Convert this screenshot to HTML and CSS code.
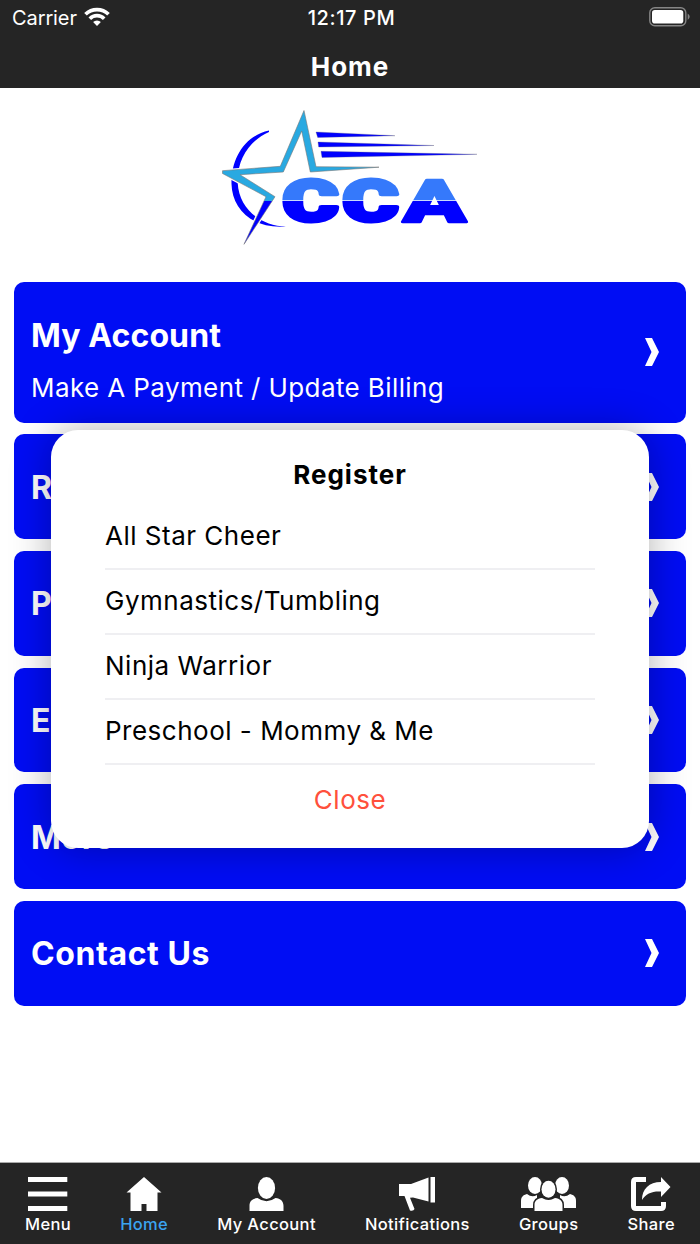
FILE: index.html
```html
<!DOCTYPE html>
<html lang="en">

<head>
	<meta charset="UTF-8">
	<meta name="viewport" content="width=device-width, initial-scale=1.0">
	<title>Home</title>
	<link rel="stylesheet" href="styles.css">
</head>

<body>
	<header>
		<div class="status">
			<div class="carrier">
				<span>Carrier</span>
				<svg class="wifi" width="26" height="20" viewBox="0 0 26 20">
					<g fill="none" stroke="#fff" stroke-width="3.7">
						<path d="M1.5 7.3a16.3 16.3 0 0 1 23 0"/>
						<path d="M5.8 11.7a10.2 10.2 0 0 1 14.4 0"/>
					</g>
					<path d="M13 19l-3.900-4a5.500 5.500 0 0 1 7.800 0z" fill="#fff"/>
				</svg>
			</div>
			<span class="time">12:17 PM</span>
			<svg class="battery" width="42" height="20" viewBox="0 0 42 20">
				<rect x=".8" y=".8" width="36" height="18" rx="5" fill="none" stroke="#858585" stroke-width="1.4"/>
				<rect x="3" y="3" width="31.3" height="13.5" rx="2.8" fill="#fff"/>
				<path d="M38.7 6.6q4 3.2 0 6.4z" fill="#858585"/>
			</svg>
		</div>
		<h1>Home</h1>
	</header>

	<main>
		<svg class="logo" width="270" height="150" viewBox="215 100 270 150">
			<defs>
				<linearGradient id="letters" gradientUnits="userSpaceOnUse" x1="0" y1="178" x2="0" y2="224">
					<stop offset=".47" stop-color="#3579fb"/>
					<stop offset=".47" stop-color="#c8d8ff"/>
					<stop offset=".5" stop-color="#c8d8ff"/>
					<stop offset=".5" stop-color="#00f"/>
				</linearGradient>
				<linearGradient id="star" gradientUnits="userSpaceOnUse" x1="0" y1="110" x2="0" y2="245">
					<stop offset=".674" stop-color="#29a9e1"/>
					<stop offset=".674" stop-color="#00f"/>
				</linearGradient>
			</defs>
			<path fill="#00f" d="M269 130.500C244 136 231 159 231.500 184C232 208 251 229 286 226.500C261 226 239 209 237.700 183C236.500 160 250 140 269 132z"/>
			<path fill="#00f" stroke="#557" stroke-width=".3" d="M316 132L395 135.700L317.700 137.500zM318 142L434 145.500L318.700 147zM321 151.300L477 154.300L322 157.500z"/>
			<path fill="#fff" stroke="#fff" stroke-width="3" d="M222.500 170.700L280 166.500L304 112L316 167L379 167L310.300 172L301.700 131L283.300 172L240 174.700L275 196.700L244 244L266 196.700L222.500 173.500z"/>
			<path fill="url(#star)" stroke="#777" stroke-width=".6" d="M222.500 170.700L280.300 166.300L304 110.500L316 166.700L379 167.200L310.300 172L301.700 131L283.300 172L240 174.700L275 196.700L244 244.300L266 196.700L222.500 173.500z"/>
			<g class="logo-text">
				<text x="282.500" y="220.500" textLength="56" lengthAdjust="spacingAndGlyphs">C</text>
				<text x="342.500" y="220.500" textLength="56" lengthAdjust="spacingAndGlyphs">C</text>
				<text class="logo-a" x="403" y="222" textLength="63" lengthAdjust="spacingAndGlyphs">A</text>
			</g>
		</svg>

		<div class="cards">
			<a class="card tall">
				<div>
					<h2>My Account</h2>
					<p>Make A Payment / Update Billing</p>
				</div>
				<svg class="arrow" viewBox="0 0 14 28"><path d="M0 0h7l7 14-7 14H0l6.500-14z"/></svg>
			</a>
			<a class="card">
				<h2>R</h2>
				<svg class="arrow" viewBox="0 0 14 28"><path d="M0 0h7l7 14-7 14H0l6.500-14z"/></svg>
			</a>
			<a class="card">
				<h2>P</h2>
				<svg class="arrow" viewBox="0 0 14 28"><path d="M0 0h7l7 14-7 14H0l6.500-14z"/></svg>
			</a>
			<a class="card">
				<h2>E</h2>
				<svg class="arrow" viewBox="0 0 14 28"><path d="M0 0h7l7 14-7 14H0l6.500-14z"/></svg>
			</a>
			<a class="card">
				<h2>More</h2>
				<svg class="arrow" viewBox="0 0 14 28"><path d="M0 0h7l7 14-7 14H0l6.500-14z"/></svg>
			</a>
			<a class="card">
				<h2>Contact Us</h2>
				<svg class="arrow" viewBox="0 0 14 28"><path d="M0 0h7l7 14-7 14H0l6.500-14z"/></svg>
			</a>
		</div>
	</main>

	<nav>
		<a class="tab">
			<svg width="40" height="34" viewBox="0 0 40 34"><path d="M0 0h39.300v5H0zM0 14.500h39.300v5H0zM0 29h39.300v5H0z"/></svg>
			<span>Menu</span>
		</a>
		<a class="tab active">
			<svg width="36" height="34" viewBox="0 0 36 34"><path d="M18 0L35.500 15.500H31.500V34H20.500V27h-5v7H4.500V15.500H.5z"/></svg>
			<span>Home</span>
		</a>
		<a class="tab">
			<svg width="35" height="34" viewBox="0 0 35 34">
				<ellipse cx="17.500" cy="11" rx="8.600" ry="11"/>
				<path d="M.5 34v-5c0-5 3-7.500 8-8q9 6.500 18 0c5 .5 8 3 8 8v5z"/>
			</svg>
			<span>My Account</span>
		</a>
		<a class="tab">
			<svg width="36" height="34" viewBox="0 0 36 34"><path d="M0 7h12L29.500.5v24L14 20.500l-3 .3 4.500 11.200q-1 2.500-4.500 1.500L5.500 19H0zM31.500 0H36v25.500h-4.500z"/></svg>
			<span>Notifications</span>
		</a>
		<a class="tab">
			<svg width="55" height="34" viewBox="0 0 55 34">
				<ellipse cx="14" cy="8.500" rx="7" ry="8.500"/>
				<ellipse cx="41" cy="8.500" rx="7" ry="8.500"/>
				<path d="M0 31v-7c0-4 2-6 6-7q5 4 10 1v13zM55 31v-7c0-4-2-6-6-7q-5 4-10 1v13z"/>
				<g stroke="#252525" stroke-width="3" paint-order="stroke">
					<path d="M13.500 34v-6c0-4 2.500-6.500 7.500-7q6.500 4 13 0c5 .5 7.500 3 7.500 7v6z"/>
					<ellipse cx="27.500" cy="12.300" rx="7" ry="8.500"/>
				</g>
			</svg>
			<span>Groups</span>
		</a>
		<a class="tab">
			<svg width="40" height="34" viewBox="0 0 40 34">
				<path d="M15 2.500H5Q2.500 2.500 2.500 5v24Q2.500 31.500 5 31.500H30Q32.500 31.500 32.500 29V25" fill="none" stroke="#fff" stroke-width="5"/>
				<path d="M30 0l9.500 10L30 20v-5.500c-9-.5-15 2-19 8.500C11 12 18 5 30 5z"/>
			</svg>
			<span>Share</span>
		</a>
	</nav>

	<div class="dialog">
		<h3>Register</h3>
		<ul>
			<li>All Star Cheer</li>
			<li>Gymnastics/Tumbling</li>
			<li>Ninja Warrior</li>
			<li>Preschool - Mommy &amp; Me</li>
		</ul>
		<button type="button">Close</button>
	</div>
</body>
</html>
```

FILE: styles.css
```css
* {
	box-sizing: border-box;
	margin: 0;
	padding: 0;
}

body {
	display: flex;
	flex-direction: column;
	height: 1244px;
	overflow: hidden;
	font-family: Inter, "Liberation Sans", sans-serif;
	background-color: white;
}

header {
	height: 88px;
	background-color: #252525;
	color: white;
}

.status {
	display: grid;
	grid-template-columns: 1fr auto 1fr;
	align-items: center;
	height: 36px;
	padding: 0 9px 0 12px;
	font-size: 20px;
	line-height: 36px;
}

.carrier {
	display: flex;
	align-items: center;
	gap: 7px;
	letter-spacing: -0.1px;
}

.wifi {
	margin-bottom: 3px;
}

.time {
	font-weight: 500;
	letter-spacing: 0.6px;
}

.battery {
	justify-self: end;
	margin-bottom: 2px;
}

h1 {
	font-size: 26px;
	font-weight: 700;
	line-height: 61px;
	letter-spacing: 1px;
	text-align: center;
}

main {
	flex: 1;
	padding: 12px 14px 0;
}

.logo {
	display: block;
	margin-left: 201px;
}

.logo-text {
	font-family: Roboto, sans-serif;
	font-size: 57px;
	font-weight: 900;
	fill: url(#letters);
	stroke: url(#letters);
	stroke-width: 4px;
	stroke-linejoin: round;
}

.logo-a {
	font-size: 59px;
	stroke-width: 2.5px;
}

.cards {
	display: grid;
	gap: 11.8px;
	margin-top: 32.4px;
}

.card {
	display: flex;
	align-items: center;
	justify-content: space-between;
	height: 104.8px;
	padding: 0 27px 0 17px;
	border-radius: 10px;
	background-color: #000df4;
	color: white;
}

.card.tall {
	height: 140.2px;
}

h2 {
	padding-top: 2px;
	font-size: 32px;
	font-weight: 700;
	line-height: 40px;
	letter-spacing: 0.6px;
}

.card p {
	margin-top: 16px;
	font-size: 26px;
	line-height: 32px;
	letter-spacing: 0.4px;
}

.tall h2 {
	margin-top: 13px;
	letter-spacing: 0.1px;
}

.arrow {
	width: 14px;
	height: 28px;
	fill: white;
}

nav {
	display: flex;
	justify-content: space-between;
	height: 82px;
	padding: 14px 25px 0;
	border-top: 1px solid #aaa;
	background-color: #252525;
	color: white;
}

.tab {
	display: flex;
	flex-direction: column;
	align-items: center;
	font-size: 16.5px;
	font-weight: 550;
	line-height: 22px;
	letter-spacing: 0.35px;
}

.tab svg {
	margin-bottom: 2px;
	fill: white;
}

.tab.active {
	color: #3ba4ef;
}

.dialog {
	position: absolute;
	top: 430px;
	left: 51px;
	width: 598px;
	height: 418px;
	padding: 26px 54px 0;
	border-radius: 27px;
	background-color: white;
	box-shadow: 0 0 40px rgba(0, 0, 0, 0.3);
	font-size: 26px;
	letter-spacing: 0.5px;
	color: black;
}

h3 {
	font-size: 26px;
	line-height: 38px;
	letter-spacing: 1px;
	text-align: center;
}

ul {
	margin-top: 11px;
	list-style: none;
}

li {
	height: 65.1px;
	border-bottom: 2px solid #efeff2;
	line-height: 61px;
}

button {
	display: block;
	width: 100%;
	border: none;
	background: none;
	color: #ff503c;
	font: inherit;
	line-height: 70px;
	letter-spacing: 0.5px;
}
```
